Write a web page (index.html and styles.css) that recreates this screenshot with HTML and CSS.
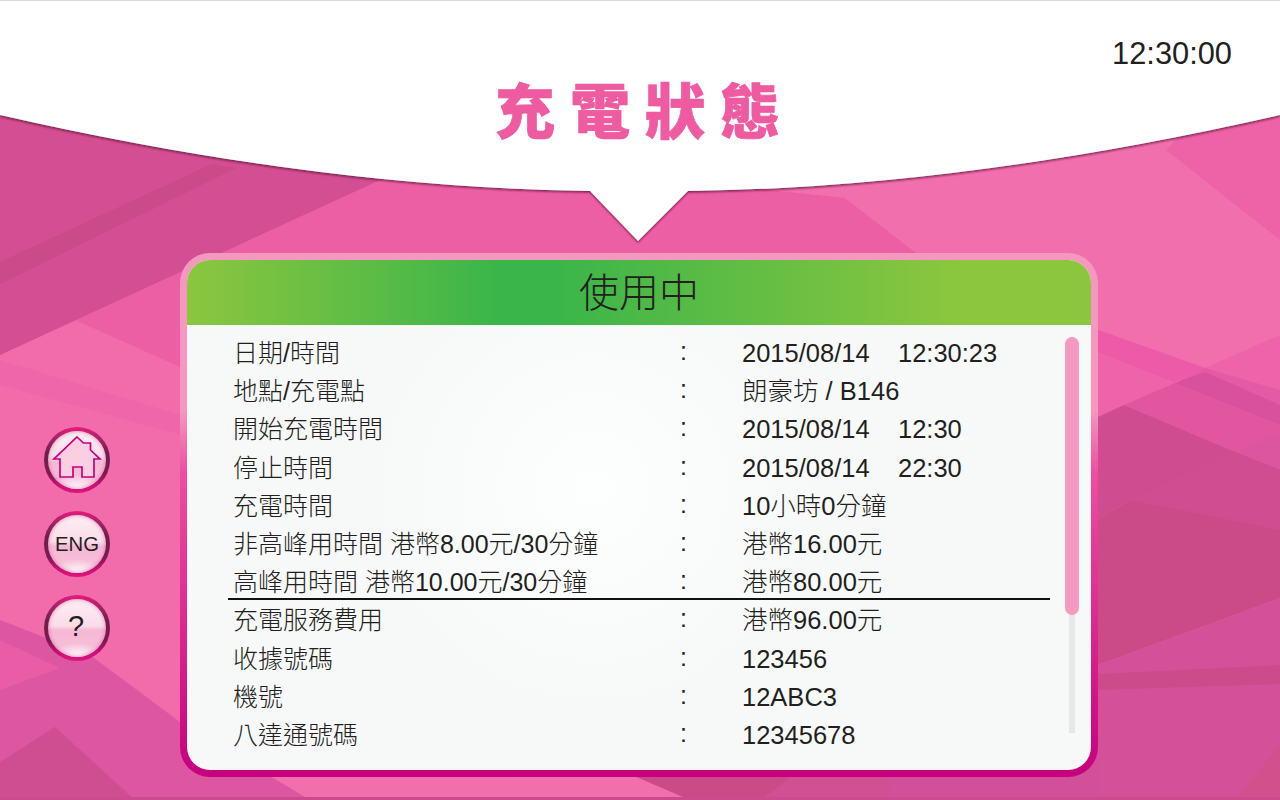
FILE: index.html
```html
<!DOCTYPE html>
<html>
  <head>
    <meta charset="UTF-8">
    <title>充電狀態</title>
    <link rel="stylesheet" href="styles.css">
  </head>
  <body>
    <div class="screen">
      <svg class="backdrop" viewBox="0 0 1280 800" width="1280" height="800">
        <defs>
          <filter id="edgeShadow" x="-2%" y="-5%" width="104%" height="115%">
            <feDropShadow dx="0" dy="1.5" stdDeviation="1.2" flood-color="#5c1038" flood-opacity="0.8"/>
          </filter>
        </defs>
        <!-- background facets, left side -->
        <rect width="1280" height="800" fill="#f26fae"/>
        <polygon points="0,110 845,198 925,260 180,400 0,400" fill="#ed5fa5"/>
        <polygon points="0,355 75,320 180,367 180,800 0,800" fill="#f26bab"/>
        <polygon points="0,110 380,180 0,355" fill="#d34e92"/>
        <polygon points="0,262 212,164 236,168 0,284" fill="#cb4a8a"/>
        <polygon points="0,360 180,415 200,440 0,385" fill="#f066aa"/>
        <polygon points="0,620 90,655 180,722 310,800 0,800" fill="#dc56a2"/>
        <polygon points="55,727 135,800 0,800 0,762" fill="#cf4e92"/>
        <polygon points="0,640 60,668 0,690" fill="#ea5ca6"/>
        <!-- bottom edge under the panel -->
        <polygon points="620,770 690,800 1110,800 1110,740 620,740" fill="#cb4a88"/>
        <polygon points="760,800 800,770 1110,770 1110,800" fill="#d14f93"/>
        <polygon points="890,740 1110,740 1110,800 890,800" fill="#d2509a"/>
        <!-- background facets, right side -->
        <polygon points="1166,150 1280,240 1280,110 1190,125" fill="#ee62a7"/>
        <polygon points="1098,330 1205,368 1280,335 1280,800 1098,800" fill="#ee63a9"/>
        <polygon points="1098,330 1205,368 1174,382 1098,352" fill="#ec5aa8"/>
        <polygon points="1205,368 1280,390 1280,425 1175,383" fill="#e45aa5"/>
        <polygon points="1175,383 1205,372 1280,405 1280,425" fill="#d9509d"/>
        <polygon points="1124,405 1175,383 1280,425 1280,435 1235,452" fill="#e1569f"/>
        <polygon points="1098,417 1124,405 1235,452 1130,500 1098,520" fill="#ce4c8f"/>
        <polygon points="1235,452 1280,433 1280,470" fill="#dc559f"/>
        <polygon points="1098,520 1130,500 1235,452 1280,470 1280,598 1098,665" fill="#cb4a88"/>
        <polygon points="1130,500 1235,452 1280,470 1280,530" fill="#d04d92"/>
        <polygon points="1098,665 1280,598 1280,800 1098,800" fill="#d4519a"/>
        <polygon points="1098,690 1280,684 1280,665 1098,674" fill="#cc4b8b"/>
        <polygon points="1235,800 1280,745 1280,800" fill="#d2508c"/>
        <rect y="797" width="1280" height="3" fill="#cc4b8f"/>
        <!-- white header shape -->
        <path class="backdrop-top" filter="url(#edgeShadow)" d="M0 0 H1280 V115 Q960 188 688 191 L638 241 L590 191 Q320 188 0 115 Z"/>
      </svg>

      <header class="top">
        <div class="clock">12:30:00</div>
        <h1 class="title">充電狀態</h1>
      </header>

      <main class="main">
        <nav class="side">
          <button class="round-btn" type="button">
            <svg viewBox="0 0 66 66" width="66" height="66" class="home-icon">
              <path d="M33 10 L39.5 16 H46.5 V23 L56 32 H50 V50 H38 V40 H29 V50 H16 V32 H10 Z"/>
            </svg>
          </button>
          <button class="round-btn" type="button">ENG</button>
          <button class="round-btn round-btn-big" type="button">?</button>
        </nav>

        <section class="panel">
          <div class="panel-head">使用中</div>
          <div class="panel-body">
            <div class="rows">
              <div class="row"><span class="row-label">日期/時間</span><span class="row-colon">:</span><span class="row-value">2015/08/14    12:30:23</span></div>
              <div class="row"><span class="row-label">地點/充電點</span><span class="row-colon">:</span><span class="row-value">朗豪坊 / B146</span></div>
              <div class="row"><span class="row-label">開始充電時間</span><span class="row-colon">:</span><span class="row-value">2015/08/14    12:30</span></div>
              <div class="row"><span class="row-label">停止時間</span><span class="row-colon">:</span><span class="row-value">2015/08/14    22:30</span></div>
              <div class="row"><span class="row-label">充電時間</span><span class="row-colon">:</span><span class="row-value">10小時0分鐘</span></div>
              <div class="row"><span class="row-label">非高峰用時間 港幣8.00元/30分鐘</span><span class="row-colon">:</span><span class="row-value">港幣16.00元</span></div>
              <div class="row row-split"><span class="row-label">高峰用時間 港幣10.00元/30分鐘</span><span class="row-colon">:</span><span class="row-value">港幣80.00元</span></div>
              <div class="row"><span class="row-label">充電服務費用</span><span class="row-colon">:</span><span class="row-value">港幣96.00元</span></div>
              <div class="row"><span class="row-label">收據號碼</span><span class="row-colon">:</span><span class="row-value">123456</span></div>
              <div class="row"><span class="row-label">機號</span><span class="row-colon">:</span><span class="row-value">12ABC3</span></div>
              <div class="row"><span class="row-label">八達通號碼</span><span class="row-colon">:</span><span class="row-value">12345678</span></div>
            </div>
            <div class="scrollbar"><div class="scrollbar-thumb"></div></div>
          </div>
        </section>
      </main>
    </div>
  </body>
</html>
```
FILE: styles.css
```css
body {
  margin: 0;
  font-family: "Liberation Sans", "Noto Sans CJK TC", sans-serif;
  color: #231f20;
}
.screen {
  position: relative;
  width: 1280px;
  height: 800px;
  overflow: hidden;
}
.backdrop {
  position: absolute;
  top: 0;
  left: 0;
}
.backdrop-top {
  fill: #fff;
}
.top {
  position: relative;
  height: 253px;
  box-sizing: border-box;
  padding-top: 35px;
  border-top: 1px solid #d9d9d9;
}
.clock {
  padding-right: 48px;
  text-align: right;
  font-size: 30.8px;
  line-height: 36px;
}
.title {
  margin: 0;
  padding-left: 10px;
  text-align: center;
  font-family: "Noto Sans CJK TC", sans-serif;
  font-weight: 900;
  font-size: 60px;
  line-height: 72px;
  letter-spacing: 15px;
  color: #ef5ba1;
  -webkit-text-stroke: 0.7px #ef5ba1;
}
.main {
  position: relative;
  display: flex;
}
.side {
  width: 180px;
  box-sizing: border-box;
  padding: 174px 0 0 44px;
  display: flex;
  flex-direction: column;
  gap: 18px;
}
.round-btn {
  width: 66px;
  height: 66px;
  padding: 0;
  border: 4px solid transparent;
  border-radius: 50%;
  display: flex;
  align-items: center;
  justify-content: center;
  background:
    radial-gradient(ellipse 26px 14px at 50% 100%, #fff 0, rgba(255, 255, 255, 0) 100%) padding-box,
    linear-gradient(#fdeef5 0, #fbdce9 46%, #f6b8d5 54%, #f7c2da 100%) padding-box,
    linear-gradient(#e8197f 0, #a42365 18%, #6f1d4c 40%, #7d1a50 70%, #c20f72 85%, #e2147e 100%) border-box;
  box-shadow: inset 0 0 4px rgba(200, 60, 130, 0.6);
  font-family: "Liberation Sans", sans-serif;
  font-size: 20.3px;
  color: #231f20;
}
.round-btn-big {
  font-size: 29px;
  padding-bottom: 3px;
  padding-right: 2px;
}
.home-icon {
  flex: none;
  margin: -4px;
}
.home-icon path {
  fill: #f9cfe1;
  stroke: #c6007e;
  stroke-width: 1.7;
}
.panel {
  width: 918px;
  height: 524px;
  box-sizing: border-box;
  border: 7px solid transparent;
  border-radius: 30px;
  background:
    radial-gradient(circle at 45% 45%, #fdfefe 0, #f7f9f9 40%) padding-box,
    linear-gradient(#f598c0 0, #f598c0 30%, #ee4d9f 42%, #dc2a8e 70%, #c6007e 100%) border-box;
}
.panel-head {
  height: 65px;
  border-radius: 23px 23px 0 0;
  background: linear-gradient(90deg, #8cc63f 0, #39b54a 35%, #39b54a 40%, #8cc63f 85%);
  text-align: center;
  font-size: 40px;
  font-weight: 300;
  line-height: 66px;
}
.panel-body {
  display: flex;
  padding: 9px 0 0 41px;
}
.rows {
  width: 822px;
}
.row {
  display: flex;
  height: 38.2px;
  line-height: 38.2px;
  font-size: 25px;
  font-weight: 300;
  white-space: pre;
}
.row-split {
  background: linear-gradient(#111, #111) 0 34.5px / 100% 2px no-repeat;
}
.row-label {
  width: 452px;
  padding-left: 5px;
  box-sizing: border-box;
}
.row-colon {
  width: 62px;
  line-height: 34px;
  font-weight: 400;
}
.row-value {
  font-size: 25.5px;
}
.scrollbar {
  width: 14px;
  height: 396px;
  margin: 3px 0 0 15px;
  background: linear-gradient(#e6e7e8, #e6e7e8) center / 6px 100% no-repeat;
}
.scrollbar-thumb {
  height: 278px;
  border-radius: 7px;
  background: #f49ac1;
}
```
